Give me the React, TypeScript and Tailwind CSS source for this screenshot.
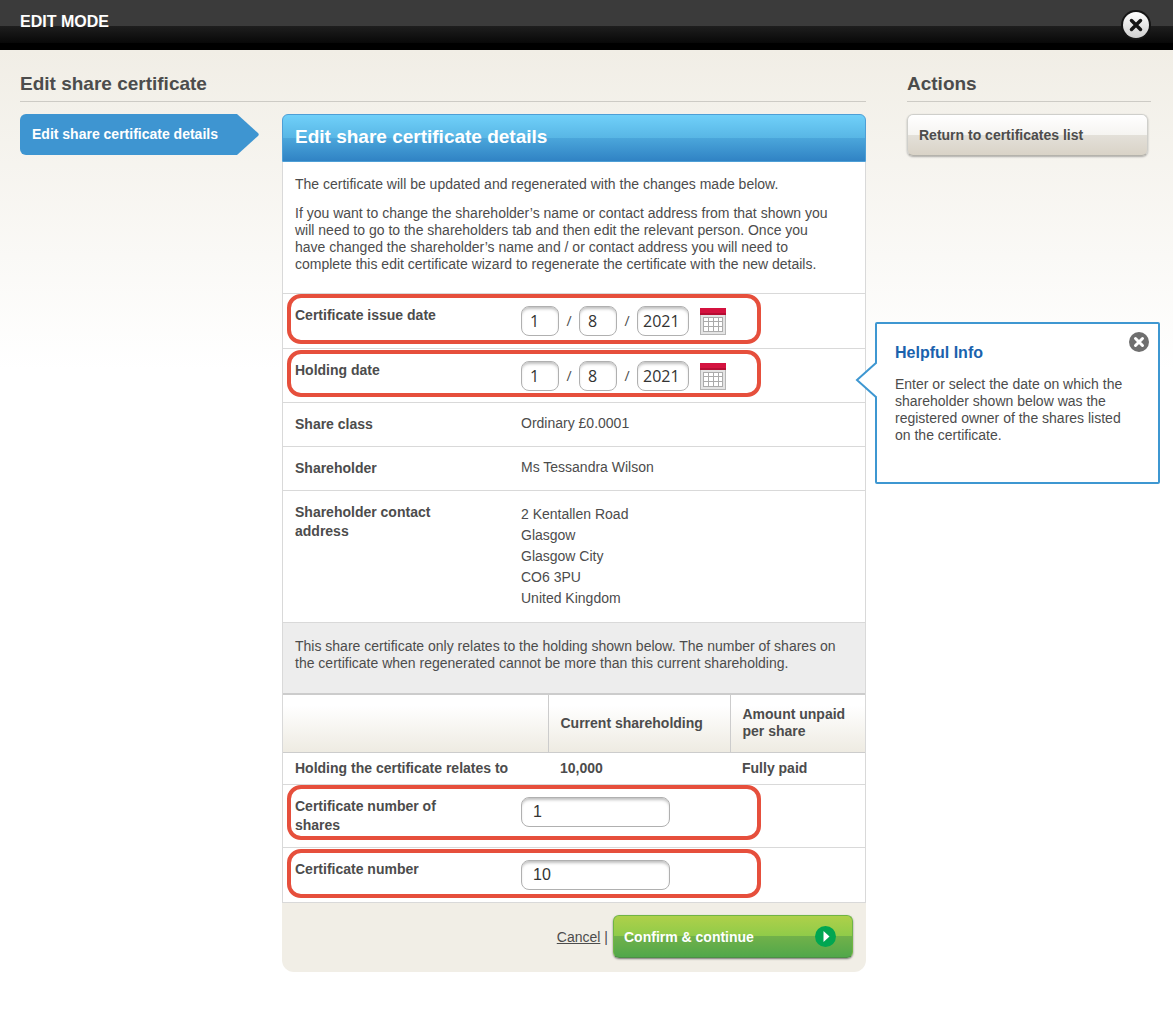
import React, { useState } from 'react';
import clsx from 'clsx';

interface DateValue {
  day: string;
  month: string;
  year: string;
}

const address = ['2 Kentallen Road', 'Glasgow', 'Glasgow City', 'CO6 3PU', 'United Kingdom'];

const inputClass =
  'h-[30px] rounded-lg border border-[#b0b0b0] bg-white text-base text-[#333] shadow-[inset_0_3px_3px_-1px_rgba(0,0,0,0.25)] outline-none focus:border-[#3e97d1]';

const CalendarIcon: React.FC = () => (
  <svg width="26" height="27" viewBox="0 0 26 27" aria-hidden="true">
    <rect x="0.5" y="5.5" width="25" height="21" fill="#e4e4e4" stroke="#b5b5b5" />
    <rect width="26" height="7" fill="#d4123f" />
    <rect y="5" width="26" height="2" fill="#b50d33" />
    <rect x="3" y="9" width="20" height="15" fill="#fff" />
    <path
      d="M3.5 9v15M8.5 9v15M13.5 9v15M18.5 9v15M22.5 9v15M3 9.5h20M3 13.5h20M3 18.5h20M3 23.5h20"
      stroke="#ababab"
      fill="none"
    />
  </svg>
);

// Red outline drawn around the rows the user can edit
const Highlight: React.FC<{ className?: string }> = ({ className }) => (
  <span
    aria-hidden="true"
    className={clsx('pointer-events-none absolute left-1 w-[474px] rounded-[14px] border-4 border-[#e64f3c]', className)}
  />
);

const DateFields: React.FC<{ id: string; label: string; initial: DateValue }> = ({ id, label, initial }) => {
  const [value, setValue] = useState(initial);

  return (
    <div className="flex items-center self-start font-['Open_Sans','Noto_Sans',sans-serif]">
      <input
        id={id}
        value={value.day}
        onChange={(e) => setValue({ ...value, day: e.target.value })}
        className={clsx(inputClass, 'w-[38px] pl-2')}
      />
      <span className="w-5 text-center text-sm">/</span>
      <input
        aria-label={`${label} month`}
        value={value.month}
        onChange={(e) => setValue({ ...value, month: e.target.value })}
        className={clsx(inputClass, 'w-[38px] pl-2')}
      />
      <span className="w-5 text-center text-sm">/</span>
      <input
        aria-label={`${label} year`}
        value={value.year}
        onChange={(e) => setValue({ ...value, year: e.target.value })}
        className={clsx(inputClass, 'w-[52px] pl-[5px]')}
      />
      <button type="button" aria-label={`Choose ${label}`} className="ml-[11px] cursor-pointer">
        <CalendarIcon />
      </button>
    </div>
  );
};

const HelpPopup: React.FC<{ onClose: () => void }> = ({ onClose }) => (
  <div className="absolute -top-[27px] left-full z-10 ml-[10px] h-[162px] w-[285px] rounded-xs border-2 border-[#3e97d1] bg-white py-5 pr-6 pl-[18px]">
    <svg width="23" height="38" viewBox="0 0 23 38" className="absolute top-[37px] -left-[22px]" aria-hidden="true">
      <path d="M23 1 21.5 2 2 19 21.5 36 23 37z" fill="#fff" />
      <path d="M21.5 1.5 2 19 21.5 36.5" fill="none" stroke="#3e97d1" strokeWidth="2" />
    </svg>
    <button type="button" aria-label="Close help" onClick={onClose} className="absolute top-[7px] right-2 cursor-pointer">
      <svg width="22" height="22" viewBox="0 0 22 22">
        <circle cx="11" cy="11" r="10" fill="#6f6f6f" />
        <path d="m7.5 7.5 7 7m0-7-7 7" stroke="#fff" strokeWidth="3" strokeLinecap="round" />
      </svg>
    </button>
    <h3 className="text-base leading-[17px] font-bold text-[#1a62ad]">Helpful Info</h3>
    <p className="mt-[15px] leading-[17px]">
      Enter or select the date on which the shareholder shown below was the registered owner of the shares listed on the
      certificate.
    </p>
  </div>
);

const App: React.FC = () => {
  const [showHelp, setShowHelp] = useState(true);
  const [shares, setShares] = useState('1');
  const [certNumber, setCertNumber] = useState('10');

  return (
    <div className="min-h-screen bg-linear-to-b from-[#f1eee6] from-[50px] via-white via-[370px] to-white font-['Liberation_Sans',Arial,sans-serif] text-sm text-[#4c4c4c]">
      <header className="flex h-[50px] justify-between bg-[linear-gradient(#3b3b3b_26px,#1e1e1e_26px,#080808_43px,#000_43px)] pr-[22px] pl-5">
        <h1 className="pt-[13px] text-base leading-[17px] font-bold text-white">EDIT MODE</h1>
        <button type="button" aria-label="Close" className="cursor-pointer">
          <svg width="30" height="30" viewBox="0 0 30 30">
            <defs>
              <linearGradient id="close-fill" x1="0" y1="0" x2="0" y2="1">
                <stop offset="0" stopColor="#fff" />
                <stop offset="1" stopColor="#cfcfcf" />
              </linearGradient>
            </defs>
            <circle cx="15" cy="15" r="15" fill="#151515" />
            <circle cx="15" cy="15" r="13" fill="url(#close-fill)" />
            <path d="m10.500 10.500 9 9m0-9-9 9" stroke="#151515" strokeWidth="3.500" strokeLinecap="round" />
          </svg>
        </button>
      </header>

      <div className="flex items-start gap-[41px] pt-[22px] pr-[22px] pb-12 pl-5">
        <main className="min-w-0 flex-1">
          <h2 className="h-[30px] border-b border-[#cdcbc5] text-[19px] leading-6 font-bold">Edit share certificate</h2>
          <div className="mt-3 flex items-start">
            <nav className="w-[262px] shrink-0">
              <a href="#details" className="flex h-[41px] w-[239px] font-bold text-white">
                <span className="flex-1 rounded-l-md bg-[#3e95d1] pt-3 pl-3 leading-[17px] whitespace-nowrap">
                  Edit share certificate details
                </span>
                <svg width="23" height="41" viewBox="0 0 23 41" className="shrink-0" aria-hidden="true">
                  <path d="M0 0h1L22 19q1.500 1.500 0 3L1 41H0z" fill="#3e95d1" />
                </svg>
              </a>
            </nav>

            <form id="details" className="min-w-0 flex-1" onSubmit={(e) => e.preventDefault()}>
              <h2 className="h-12 rounded-t-md border border-[#4e9fd6] bg-[linear-gradient(#70d0f9,#58b6e5_50%,#4ba6db_50%,#3083c4)] pt-[10px] pl-3 text-[19px] leading-6 font-bold text-white">
                Edit share certificate details
              </h2>

              <div className="border-x border-[#d9d9d9] bg-white">
                <div className="h-[131px] space-y-3 pt-[14px] pr-6 pl-3 leading-[17px]">
                  <p>The certificate will be updated and regenerated with the changes made below.</p>
                  <p className="pr-3">
                    If you want to change the shareholder’s name or contact address from that shown you will need to go
                    to the shareholders tab and then edit the relevant person. Once you have changed the shareholder’s
                    name and / or contact address you will need to complete this edit certificate wizard to regenerate
                    the certificate with the new details.
                  </p>
                </div>

                <div className="relative flex h-[55px] border-t border-[#d9d9d9] pt-3 pl-3">
                  <Highlight className="top-0 bottom-1" />
                  <label htmlFor="issue-date" className="w-[226px] leading-[19px] font-bold">
                    Certificate issue date
                  </label>
                  <DateFields id="issue-date" label="Certificate issue date" initial={{ day: '1', month: '8', year: '2021' }} />
                </div>

                <div className="relative flex h-[54px] border-t border-[#d9d9d9] pt-3 pl-3">
                  <Highlight className="top-[1px] bottom-[5px]" />
                  <label htmlFor="holding-date" className="w-[226px] leading-[19px] font-bold">
                    Holding date
                  </label>
                  <DateFields id="holding-date" label="Holding date" initial={{ day: '1', month: '8', year: '2021' }} />
                  {showHelp && <HelpPopup onClose={() => setShowHelp(false)} />}
                </div>

                <dl>
                  <div className="flex h-11 border-t border-[#d9d9d9] pt-3 pl-3 leading-[19px]">
                    <dt className="w-[226px] font-bold">Share class</dt>
                    <dd className="leading-[17px]">Ordinary £0.0001</dd>
                  </div>
                  <div className="flex h-11 border-t border-[#d9d9d9] pt-3 pl-3 leading-[19px]">
                    <dt className="w-[226px] font-bold">Shareholder</dt>
                    <dd className="leading-[17px]">Ms Tessandra Wilson</dd>
                  </div>
                  <div className="flex h-[132px] border-t border-[#d9d9d9] pt-3 pl-3 leading-[19px]">
                    <dt className="w-[226px] pr-16 font-bold">Shareholder contact address</dt>
                    <dd className="pt-px leading-[21px]">
                      {address.map((line) => (
                        <div key={line}>{line}</div>
                      ))}
                    </dd>
                  </div>
                </dl>

                <p className="h-[71px] border-t border-[#d9d9d9] bg-[#ededed] pt-[15px] pr-3 pl-3 leading-[17px]">
                  This share certificate only relates to the holding shown below. The number of shares on the
                  certificate when regenerated cannot be more than this current shareholding.
                </p>

                <table className="w-full table-fixed border-collapse border-t-2 border-[#cccccc] text-left">
                  <thead>
                    <tr className="h-[58px] bg-linear-to-b from-white from-20% to-[#eeebe2] leading-[17px]">
                      <td />
                      <th className="w-[182px] border-l border-[#cccccc] pl-3">Current shareholding</th>
                      <th className="w-[135px] border-l border-[#cccccc] pl-3">Amount unpaid per share</th>
                    </tr>
                  </thead>
                  <tbody>
                    <tr className="h-8 border-t border-[#cccccc] font-bold">
                      <th scope="row" className="pl-3">
                        Holding the certificate relates to
                      </th>
                      <td className="pl-3">10,000</td>
                      <td className="pl-3">Fully paid</td>
                    </tr>
                  </tbody>
                </table>

                <div className="relative flex h-[63px] border-t border-[#d9d9d9] pt-3 pl-3">
                  <Highlight className="top-0 bottom-[7px]" />
                  <label htmlFor="shares" className="w-[226px] pr-16 leading-[19px] font-bold">
                    Certificate number of shares
                  </label>
                  <input
                    id="shares"
                    value={shares}
                    onChange={(e) => setShares(e.target.value)}
                    className={clsx(inputClass, 'w-[149px] pl-[11px]')}
                  />
                </div>

                <div className="relative flex h-[55px] border-t border-[#d9d9d9] pt-3 pl-3">
                  <Highlight className="top-[1px] bottom-1" />
                  <label htmlFor="cert-number" className="w-[226px] leading-[19px] font-bold">
                    Certificate number
                  </label>
                  <input
                    id="cert-number"
                    value={certNumber}
                    onChange={(e) => setCertNumber(e.target.value)}
                    className={clsx(inputClass, 'w-[149px] pl-[11px]')}
                  />
                </div>
              </div>

              <footer className="flex h-[70px] items-start justify-end rounded-b-xl border-t border-[#d9d9d9] bg-[#f1eee6] pt-3 pr-[13px]">
                <div className="flex h-11 items-center gap-1">
                  <a href="#cancel" className="underline">
                    Cancel
                  </a>
                  <span>|</span>
                </div>
                <button
                  type="submit"
                  className="ml-[5px] flex h-[43px] w-[240px] cursor-pointer items-center justify-between rounded-md border border-[#6fb544] border-b-[#4c8f45] bg-[linear-gradient(#aed04a,#8fcb49_50%,#71b14a_50%,#51a74a)] pr-4 pl-[10px] font-bold text-white shadow-[0_1px_2px_rgba(0,0,0,0.5)]"
                >
                  Confirm &amp; continue
                  <svg width="21" height="21" viewBox="0 0 21 21" aria-hidden="true">
                    <circle cx="10.500" cy="10.500" r="10.500" fill="#00a651" />
                    <path d="M8.500 5v11l6-5.500z" fill="#fff" />
                  </svg>
                </button>
              </footer>
            </form>
          </div>
        </main>

        <aside className="w-[244px] shrink-0">
          <h2 className="h-[30px] border-b border-[#cdcbc5] text-[19px] leading-6 font-bold">Actions</h2>
          <div className="pt-3 pr-[3px]">
            <button
              type="button"
              className="h-[42px] w-full cursor-pointer rounded-md border border-[#cfcfcb] border-b-[#b5b3ac] bg-[linear-gradient(#fff,#f5f4f1_50%,#e3e0d9_50%,#d9d3c7)] pl-[11px] text-left font-bold shadow-[0_1px_2px_rgba(0,0,0,0.3)]"
            >
              Return to certificates list
            </button>
          </div>
        </aside>
      </div>
    </div>
  );
};

export default App;
